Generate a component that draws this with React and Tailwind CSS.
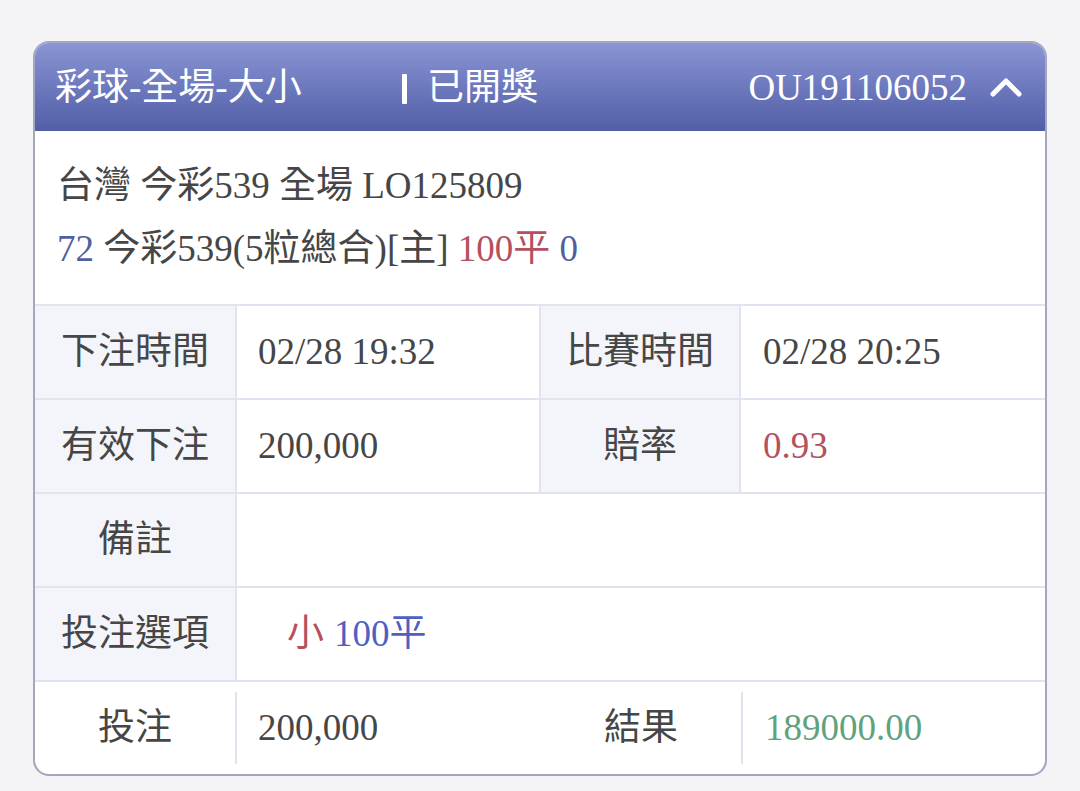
import React from "react";

const FONT = { fontFamily: '"Liberation Serif", "Noto Sans CJK TC", serif' };

function Label({ children, w, last }) {
  return (
    <div
      className={`${w} h-full flex items-center justify-center shrink-0 ${
        last ? "bg-white" : "bg-[#f4f5fa] border-r-2 border-[#e1e3ee]"
      }`}
    >
      {children}
    </div>
  );
}

function InsetSep() {
  return <div className="w-[2px] h-[72px] bg-[#e1e3ee] shrink-0" />;
}

export default function App() {
  return (
    <div
      className="min-h-screen w-full bg-[#f4f4f6] pt-[41px] pb-[15px] px-[33px] text-[#464646]"
      style={FONT}
    >
      <div className="w-[1014px] h-[735px] border-2 border-[#a3a7c0] rounded-[16px] overflow-hidden bg-white flex flex-col text-[37px]">
        {/* Header */}
        <div className="h-[88px] shrink-0 bg-linear-to-b from-[#8a95d5] to-[#525ea6] flex items-center pl-[20px] pr-[23px] text-white">
          <div className="w-[347px] leading-none">彩球-全場-大小</div>
          <div className="w-[5px] h-[30px] bg-white rounded-[1px] mt-[3px]" />
          <div className="ml-[20px] leading-none">已開獎</div>
          <div className="ml-auto leading-none">OU191106052</div>
          <svg
            className="ml-[23px]"
            width="32"
            height="22"
            viewBox="0 0 32 22"
            fill="none"
          >
            <path
              d="M3 18 L16 5 L29 18"
              stroke="white"
              strokeWidth="5"
              strokeLinecap="round"
              strokeLinejoin="round"
            />
          </svg>
        </div>

        {/* Info */}
        <div className="pt-[23px] pb-[23px] px-[22px] leading-[63px] h-[173px] shrink-0">
          <div>台灣 今彩539 全場 LO125809</div>
          <div>
            <span className="text-[#4f5fa0]">72</span> 今彩539(5粒總合)[主]{" "}
            <span className="text-[#b5505e]">100平</span>{" "}
            <span className="text-[#4f5fa0]">0</span>
          </div>
        </div>

        {/* Row 1 */}
        <div className="h-[94px] shrink-0 border-t-2 border-[#e1e3ee] flex items-stretch">
          <Label w="w-[202px]">下注時間</Label>
          <div className="w-[304px] shrink-0 flex items-center pl-[21px] border-r-2 border-[#e1e3ee]">
            02/28 19:32
          </div>
          <Label w="w-[200px]">比賽時間</Label>
          <div className="flex-1 flex items-center pl-[22px]">02/28 20:25</div>
        </div>

        {/* Row 2 */}
        <div className="h-[94px] shrink-0 border-t-2 border-[#e1e3ee] flex items-stretch">
          <Label w="w-[202px]">有效下注</Label>
          <div className="w-[304px] shrink-0 flex items-center pl-[21px] border-r-2 border-[#e1e3ee]">
            200,000
          </div>
          <Label w="w-[200px]">賠率</Label>
          <div className="flex-1 flex items-center pl-[22px] text-[#b5505e]">0.93</div>
        </div>

        {/* Row 3 */}
        <div className="h-[94px] shrink-0 border-t-2 border-[#e1e3ee] flex items-stretch">
          <Label w="w-[202px]">備註</Label>
          <div className="flex-1" />
        </div>

        {/* Row 4 */}
        <div className="h-[94px] shrink-0 border-t-2 border-[#e1e3ee] flex items-stretch">
          <Label w="w-[202px]">投注選項</Label>
          <div className="flex-1 flex items-center pl-[50px]">
            <span className="text-[#b5505e]">小</span>
            <span className="ml-[10px] text-[#5060c0]">100平</span>
          </div>
        </div>

        {/* Row 5 */}
        <div className="h-[94px] shrink-0 border-t-2 border-[#e1e3ee] flex items-center">
          <div className="w-[200px] shrink-0 flex justify-center">投注</div>
          <InsetSep />
          <div className="w-[304px] shrink-0 pl-[21px]">200,000</div>
          <div className="w-[200px] shrink-0 flex justify-center">結果</div>
          <InsetSep />
          <div className="flex-1 pl-[22px] text-[#5fa27e]">189000.00</div>
        </div>
      </div>
    </div>
  );
}
